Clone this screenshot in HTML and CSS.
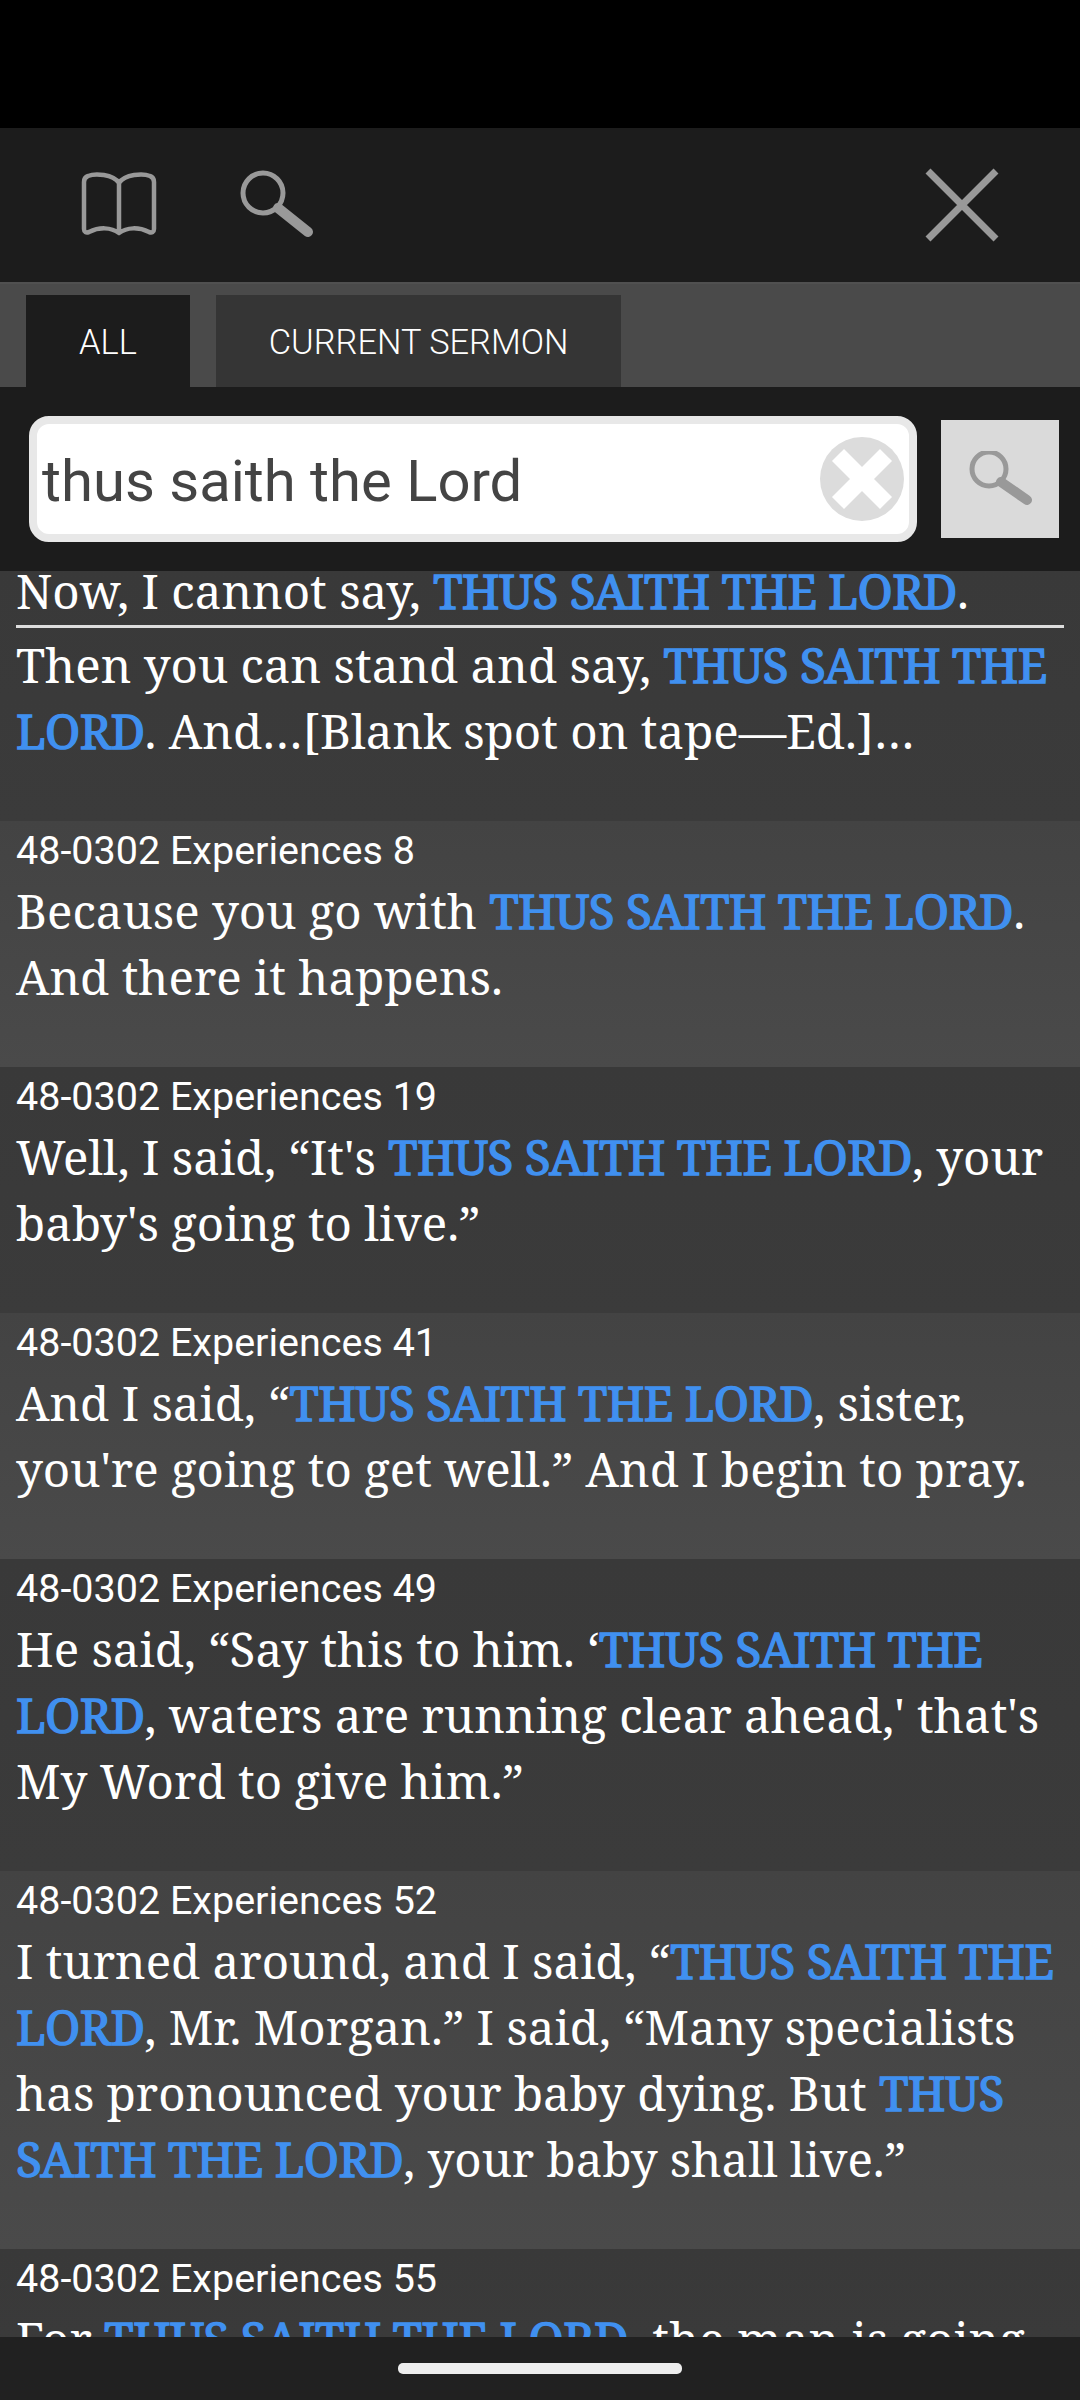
FILE: index.html
```html
<!DOCTYPE html>
<html lang="en">
<head>
    <meta charset="UTF-8">
    <title>Search</title>
    <link rel="stylesheet" href="styles.css">
</head>
<body>
    <div class="status"></div>
    <div class="toolbar">
        <svg class="icon-book" width="76" height="66" viewBox="0 0 76 66">
            <path d="M38 13C32 4 14 3 7 6C4 7 3 9 3 12V59C3 62 5 63 8 62C18 57 30 57 38 63C46 57 58 57 68 62C71 63 73 62 73 59V12C73 9 72 7 69 6C62 3 44 4 38 13V63" fill="none" stroke="#999" stroke-width="4.5" stroke-linejoin="round"/>
        </svg>
        <svg class="icon-search" width="74" height="68" viewBox="0 0 74 68">
            <circle cx="23" cy="23" r="20" fill="none" stroke="#999" stroke-width="5"/>
            <path d="M38 38L68 62" stroke="#999" stroke-width="10" stroke-linecap="round"/>
        </svg>
        <svg class="icon-close" width="74" height="74" viewBox="0 0 74 74">
            <path d="M3 3L71 71M71 3L3 71" stroke="#999" stroke-width="7"/>
        </svg>
    </div>
    <div class="tabs">
        <div class="tab active">ALL</div>
        <div class="tab">CURRENT SERMON</div>
    </div>
    <div class="searchbar">
        <div class="input">
            <span class="query">thus saith the Lord</span>
            <svg class="icon-clear" width="84" height="84" viewBox="0 0 84 84">
                <circle cx="42" cy="42" r="42" fill="#dcdcdc"/>
                <path d="M18 18L66 66M66 18L18 66" stroke="#fff" stroke-width="17"/>
            </svg>
        </div>
        <div class="go">
            <svg width="66" height="56" viewBox="0 0 66 56">
                <circle cx="22" cy="18" r="17" fill="none" stroke="#999" stroke-width="5"/>
                <path d="M34 31L60 49" stroke="#999" stroke-width="10" stroke-linecap="round"/>
            </svg>
        </div>
    </div>
    <div class="results">
        <div class="row dark first">
            <p class="verse marked">Now, I cannot say, <b>THUS SAITH THE LORD</b>.</p>
            <p class="verse">Then you can stand and say, <b>THUS SAITH THE LORD</b>. And…[Blank spot on tape—Ed.]…</p>
        </div>
        <div class="row light">
            <div class="ref">48-0302 Experiences 8</div>
            <p class="verse">Because you go with <b>THUS SAITH THE LORD</b>. And there it happens.</p>
        </div>
        <div class="row dark">
            <div class="ref">48-0302 Experiences 19</div>
            <p class="verse">Well, I said, “It's <b>THUS SAITH THE LORD</b>, your baby's going to live.”</p>
        </div>
        <div class="row light">
            <div class="ref">48-0302 Experiences 41</div>
            <p class="verse">And I said, “<b>THUS SAITH THE LORD</b>, sister, you're going to get well.” And I begin to pray.</p>
        </div>
        <div class="row dark">
            <div class="ref">48-0302 Experiences 49</div>
            <p class="verse">He said, “Say this to him. ‘<b>THUS SAITH THE LORD</b>, waters are running clear ahead,' that's My Word to give him.”</p>
        </div>
        <div class="row light">
            <div class="ref">48-0302 Experiences 52</div>
            <p class="verse">I turned around, and I said, “<b>THUS SAITH THE LORD</b>, Mr. Morgan.” I said, “Many specialists has pronounced your baby dying. But <b>THUS SAITH THE LORD</b>, your baby shall live.”</p>
        </div>
        <div class="row dark">
            <div class="ref">48-0302 Experiences 55</div>
            <p class="verse">For <b>THUS SAITH THE LORD</b>, the man is going</p>
        </div>
    </div>
    <div class="navbar"><div class="pill"></div></div>
</body>
</html>
```

FILE: styles.css
```css
* {
    box-sizing: border-box;
}

html, body {
    margin: 0;
    height: 2400px;
    overflow: hidden;
}

body {
    display: flex;
    flex-direction: column;
    background-color: #1c1c1c;
    font-family: Roboto, sans-serif;
}

svg {
    display: block;
    flex: none;
}

.status {
    height: 128px;
    background-color: #000;
}

.toolbar {
    height: 154px;
    display: flex;
    align-items: center;
    padding: 0 81px;
    background-color: #1c1c1c;
}

.icon-book {
    margin-bottom: 5px;
}

.icon-search {
    margin-left: 83px;
    margin-bottom: 3px;
}

.icon-close {
    margin-left: auto;
}

.tabs {
    height: 105px;
    display: flex;
    gap: 26px;
    padding: 11px 0 0 26px;
    background-color: #4a4a4a;
    border-top: 2px solid #505050;
}

.tab {
    display: flex;
    align-items: center;
    padding: 2px 53px 0;
    background-color: #353535;
    color: #fff;
    font-weight: 300;
    font-size: 34.4px;
}

.tab.active {
    background-color: #1c1c1c;
}

.searchbar {
    height: 184px;
    display: flex;
    align-items: center;
    padding-left: 29px;
    gap: 24px;
}

.input {
    width: 888px;
    height: 126px;
    display: flex;
    align-items: center;
    justify-content: space-between;
    padding: 0 5px 0 5px;
    background-color: #fff;
    border: 8px solid #e8e8e8;
    border-radius: 20px;
}

.query {
    color: #444;
    font-size: 58px;
    padding-top: 4px;
}

.go {
    width: 118px;
    height: 118px;
    display: flex;
    align-items: center;
    justify-content: center;
    background-color: #dadada;
}

.results {
    flex: 1;
    overflow: hidden;
}

.row {
    padding: 3px 16px 57px;
    color: #fff;
}

.row.first {
    padding-top: 0;
}

.dark {
    background: linear-gradient(#393939, #3b3b3b);
}

.light {
    background: linear-gradient(#434343, #4a4a4a);
}

.ref {
    font-size: 39.5px;
    line-height: 54px;
}

.verse {
    margin: 0;
    font-family: "Noto Serif", "Droid Serif", "DejaVu Serif", serif;
    font-size: 47.5px;
    line-height: 66px;
}

.verse b {
    color: #4090f0;
    font-weight: 400;
    letter-spacing: -0.5px;
    -webkit-text-stroke: 1.4px #4090f0;
}

.marked {
    line-height: 40px;
    padding-bottom: 14px;
    border-bottom: 3px solid #ddd;
    margin-bottom: 4px;
}

.navbar {
    height: 63px;
    display: flex;
    justify-content: center;
    padding-top: 26px;
    background-color: #212121;
}

.pill {
    width: 284px;
    height: 11px;
    border-radius: 5px;
    background-color: #eee;
}
```
